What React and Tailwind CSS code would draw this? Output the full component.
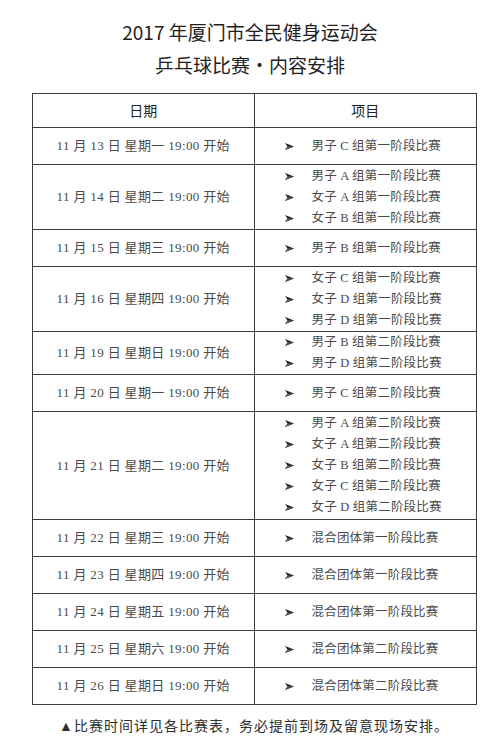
import React from "react";

const rows = [
  { d: "13", w: "星期一", items: ["男子 C 组第一阶段比赛"], h: "h-[37px]" },
  { d: "14", w: "星期二", items: ["男子 A 组第一阶段比赛", "女子 A 组第一阶段比赛", "女子 B 组第一阶段比赛"], h: "h-[65px]" },
  { d: "15", w: "星期三", items: ["男子 B 组第一阶段比赛"], h: "h-[37px]" },
  { d: "16", w: "星期四", items: ["女子 C 组第一阶段比赛", "女子 D 组第一阶段比赛", "男子 D 组第一阶段比赛"], h: "h-[65px]" },
  { d: "19", w: "星期日", items: ["男子 B 组第二阶段比赛", "男子 D 组第二阶段比赛"], h: "h-[43px]" },
  { d: "20", w: "星期一", items: ["男子 C 组第二阶段比赛"], h: "h-[37px]" },
  { d: "21", w: "星期二", items: ["男子 A 组第二阶段比赛", "女子 A 组第二阶段比赛", "女子 B 组第二阶段比赛", "女子 C 组第二阶段比赛", "女子 D 组第二阶段比赛"], h: "h-[108px]" },
  { d: "22", w: "星期三", items: ["混合团体第一阶段比赛"], h: "h-[37px]" },
  { d: "23", w: "星期四", items: ["混合团体第一阶段比赛"], h: "h-[37px]" },
  { d: "24", w: "星期五", items: ["混合团体第一阶段比赛"], h: "h-[37px]" },
  { d: "25", w: "星期六", items: ["混合团体第二阶段比赛"], h: "h-[37px]" },
  { d: "26", w: "星期日", items: ["混合团体第二阶段比赛"], h: "h-[37px]" },
];

function Arrow() {
  return (
    <svg width="9" height="7" viewBox="0 0 9 7" className="shrink-0">
      <polygon points="0,0 9,3.5 0,7 2.5,3.5" fill="#222" />
      <polygon points="0,7 9,3.5 2.5,3.5" fill="#555" />
    </svg>
  );
}

export default function App() {
  return (
    <div className="w-[500px] h-[741px] bg-white overflow-hidden font-['Liberation_Serif','Noto_Sans_CJK_SC',serif]">
      <div className="pt-[15px] text-center font-['Noto_Sans_CJK_SC','Noto_Sans',sans-serif] text-[19px] leading-[33px] text-[#1e1e1e]">
        <div>2017 年厦门市全民健身运动会</div>
        <div>
          乒乓球比赛<span className="inline-block w-[19px] text-center">·</span>内容安排
        </div>
      </div>
      <div className="mt-[12px] ml-[32px] w-[445px] border-[1.5px] border-[#3c3c3c]">
        <div className="grid grid-cols-2 h-[33px] font-['Noto_Sans_CJK_SC',sans-serif] text-[14px] text-[#222]">
          <div className="flex items-center justify-center border-r-[1.5px] border-[#3c3c3c]">日期</div>
          <div className="flex items-center justify-center">项目</div>
        </div>
        {rows.map((r, i) => (
          <div key={i} className={`grid grid-cols-2 border-t-[1.5px] border-[#3c3c3c] ${r.h}`}>
            <div className="flex items-center justify-center border-r-[1.5px] border-[#3c3c3c] text-[13px] tracking-[0.35px] text-[#4a4a4a] whitespace-pre">
              {`11 月 ${r.d} 日 ${r.w} 19:00 开始`}
            </div>
            <div className="flex flex-col justify-center pl-[30px] text-[12.5px] tracking-[0.2px] text-[#4a4a4a] whitespace-pre">
              {r.items.map((t, j) => (
                <div key={j} className="flex items-center h-[21px]">
                  <Arrow />
                  <span className="ml-[18px]">{t}</span>
                </div>
              ))}
            </div>
          </div>
        ))}
      </div>
      <div className="mt-[11px] pl-[8px] text-center text-[14px] leading-[22px] tracking-[1px] text-[#2e2e2e]">
        ▲比赛时间详见各比赛表，务必提前到场及留意现场安排。
      </div>
    </div>
  );
}
